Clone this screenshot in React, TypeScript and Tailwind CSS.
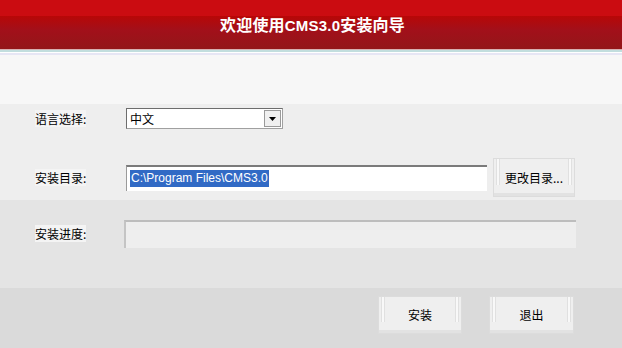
import React from "react"

const cjk = "font-['SimSun','Noto_Sans_CJK_SC',sans-serif]"

function SkinButton({ label, className = "" }: { label: string; className?: string }) {
	return (
		<div
			className={`relative flex items-center justify-center border border-[#dcdcdc] bg-[#efefef] text-[12px] text-black shadow-[inset_0_-3px_0_#e2e2e2] ${className}`}
		>
			<span className="absolute top-0 left-[2px] h-[70%] w-[4px] bg-[#f8f8f8] border-x border-[#e0e0e0]" />
			<span className="absolute top-0 right-[2px] h-[70%] w-[4px] bg-[#f8f8f8] border-x border-[#e0e0e0]" />
			<span className="relative">{label}</span>
		</div>
	)
}

function Label({ text, w }: { text: string; w: string }) {
	return (
		<div className={`${w} shrink-0 text-[12px] leading-[14px] text-black`}>
			<span className="bg-[#f4f4f4]">{text}</span>
		</div>
	)
}

export default function App() {
	return (
		<div className={`flex h-[348px] w-[622px] flex-col overflow-hidden ${cjk}`}>
			{/* header */}
			<div className="flex h-[49px] shrink-0 items-center justify-center bg-[linear-gradient(to_bottom,#cb0c11_0px,#cb0c11_16px,#b80707_16px,#a2101a_30px,#931719_49px)]">
				<span className="pl-[3px] text-[16px] font-bold tracking-[0.2px] text-white">
					欢迎使用<span className="font-['Liberation_Sans_Narrow','Liberation_Sans',sans-serif] text-[15px]">CMS3.0</span>安装向导
				</span>
			</div>
			<div className="h-[6px] shrink-0 bg-[linear-gradient(to_bottom,#d8b0b0_0px,#d8b0b0_1px,#c2dede_1px,#c2dede_3px,#ffffff_3px,#ffffff_4px,#e6e6f4_4px,#e6e6f4_6px)]" />
			<div className="h-[49px] shrink-0 bg-[#f7f7f7]" />

			{/* language + directory */}
			<div className="flex h-[96px] shrink-0 flex-col bg-[#eeeeee] pl-[35px]">
				<div className="mt-[4px] flex h-[21px] items-center">
					<Label text="语言选择:" w="w-[91px]" />
					<div className="flex h-[21px] w-[157px] items-center border border-t-[#6d6d6d] border-l-[#6d6d6d] border-r-[#a0a0a0] border-b-[#a0a0a0] bg-white">
						<span className="flex-1 pl-[3px] text-[12px] leading-[14px] text-black">中文</span>
						<div className="mr-[1px] flex h-[17px] w-[17px] items-center justify-center border border-[#9a9a9a] bg-[#f0f0f0]">
							<svg width="7" height="4" viewBox="0 0 7 4">
								<path d="M0 0h7L3.5 4z" fill="#000" />
							</svg>
						</div>
					</div>
				</div>
				<div className="mt-[29px] flex h-[39px] items-center">
					<Label text="安装目录:" w="w-[91px]" />
					<div className="flex h-[26px] w-[361px] items-center border-t-2 border-l border-t-[#7a7a7a] border-l-[#9a9a9a] bg-white pl-[3px]">
						<span className="bg-[#316ac5] px-[1px] font-['Liberation_Sans',sans-serif] text-[12px] leading-[17px] text-white">
							C:\Program Files\CMS3.0
						</span>
					</div>
					<SkinButton label="更改目录..." className="ml-[6px] h-[39px] w-[82px]" />
				</div>
			</div>

			{/* progress */}
			<div className="flex h-[88px] shrink-0 items-start bg-[#e4e4e4] pt-[20px] pl-[35px]">
				<div className="flex h-[28px] items-center">
					<Label text="安装进度:" w="w-[89px]" />
					<div className="h-[28px] w-[452px] border-t-2 border-l-2 border-t-[#bdbdbd] border-l-[#c4c4c4] bg-[#eeeeee]" />
				</div>
			</div>

			{/* footer */}
			<div className="flex flex-1 items-start bg-[#dadada] pt-[8px] pl-[378px]">
				<SkinButton label="安装" className="h-[38px] w-[84px]" />
				<SkinButton label="退出" className="ml-[27px] h-[38px] w-[85px]" />
			</div>
		</div>
	)
}
